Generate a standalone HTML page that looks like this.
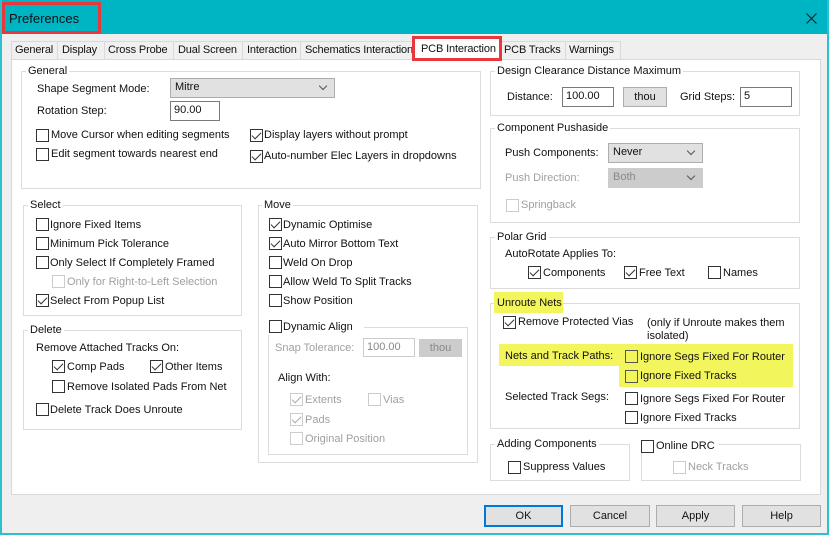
<!DOCTYPE html>
<html><head><meta charset="utf-8"><style>
*{box-sizing:border-box;margin:0;padding:0}
body{width:829px;height:535px;position:relative;overflow:hidden;background:#efefef;font-family:"Liberation Sans",sans-serif;font-size:11px;color:#111}
.a{position:absolute;white-space:nowrap}
.t{position:absolute;white-space:nowrap;line-height:14px}
.g{position:absolute;border:1px solid #dcdcdc}
.gl{position:absolute;background:#fff;padding:0 2px;line-height:14px}
.cb{position:absolute;width:13px;height:13px;border:1px solid #333;background:#fff}
.cb.d{border-color:#ccc}
.cb.c::after{content:"";position:absolute;left:3px;top:0px;width:4px;height:8px;border:solid #333;border-width:0 1.3px 1.3px 0;transform:rotate(45deg)}
.cb.d.c::after{border-color:#aaa}
.in{position:absolute;border:1px solid #7a7a7a;background:#fff;padding:1px 3px;line-height:15px}
.sel{position:absolute;border:1px solid #adadad;background:#e1e1e1;padding:1px 4px;line-height:15px}
.sel::after{content:"";position:absolute;right:8px;top:4px;width:5px;height:5px;border:solid #555;border-width:0 1px 1px 0;transform:rotate(45deg)}
.btn{position:absolute;border:1px solid #adadad;background:#e1e1e1;text-align:center;line-height:20px}
.gr{color:#a0a0a0}
.y{position:absolute;background:#f3f55c}
.tab{letter-spacing:-0.15px}
</style></head><body>
<div class="a" style="left:0;top:0;width:829px;height:34px;background:#00b5c3"></div>
<div class="a" style="left:0;top:0;width:2px;height:535px;background:#2bc0cc"></div>
<div class="a" style="right:0;top:0;width:2px;height:535px;background:#2bc0cc"></div>
<div class="a" style="left:0;bottom:0;width:829px;height:2px;background:#2bc0cc"></div>
<div class="a" style="left:2px;top:2px;width:99px;height:32px;border:3px solid #e8383d"></div>
<div class="a" style="left:9px;top:11px;font-size:13px;color:#111">Preferences</div>
<svg class="a" style="left:806px;top:13px" width="11" height="11"><path d="M0.5 0.5L10.5 10.5M10.5 0.5L0.5 10.5" stroke="#222" stroke-width="1.2"/></svg>

<!-- tabs -->
<div class="a" style="left:11px;top:41px;height:18px;border:1px solid #d9d9d9;border-bottom:none;background:#f0f0f0;width:403px"></div>
<div class="t tab" style="left:15px;top:43px">General</div>
<div class="a" style="left:57px;top:41px;width:1px;height:18px;background:#d9d9d9"></div>
<div class="t tab" style="left:62px;top:43px">Display</div>
<div class="a" style="left:104px;top:41px;width:1px;height:18px;background:#d9d9d9"></div>
<div class="t tab" style="left:108px;top:43px">Cross Probe</div>
<div class="a" style="left:173px;top:41px;width:1px;height:18px;background:#d9d9d9"></div>
<div class="t tab" style="left:178px;top:43px">Dual Screen</div>
<div class="a" style="left:242px;top:41px;width:1px;height:18px;background:#d9d9d9"></div>
<div class="t tab" style="left:247px;top:43px">Interaction</div>
<div class="a" style="left:300px;top:41px;width:1px;height:18px;background:#d9d9d9"></div>
<div class="t tab" style="left:305px;top:43px">Schematics Interaction</div>
<div class="a" style="left:499px;top:41px;width:122px;height:18px;border:1px solid #d9d9d9;border-bottom:none;background:#f0f0f0"></div>
<div class="a" style="left:565px;top:41px;width:1px;height:18px;background:#d9d9d9"></div>
<div class="t tab" style="left:504px;top:43px">PCB Tracks</div>
<div class="t tab" style="left:569px;top:43px">Warnings</div>

<!-- panel -->
<div class="a" style="left:11px;top:59px;width:810px;height:436px;background:#fff;border:1px solid #d9d9d9"></div>
<div class="a" style="left:414px;top:38px;width:85px;height:23px;background:#fff"></div>
<div class="a" style="left:412px;top:36px;width:90px;height:25px;border:3px solid #e8383d"></div>
<div class="t tab" style="left:421px;top:42px">PCB Interaction</div>

<!-- General -->
<div class="g" style="left:21px;top:71px;width:460px;height:118px"></div>
<div class="gl" style="left:26px;top:64px">General</div>
<div class="t" style="left:37px;top:82px">Shape Segment Mode:</div>
<div class="sel" style="left:170px;top:78px;width:165px;height:20px">Mitre</div>
<div class="t" style="left:37px;top:104px">Rotation Step:</div>
<div class="in" style="left:170px;top:101px;width:50px;height:20px">90.00</div>
<div class="cb" style="left:36px;top:129px"></div><div class="t" style="left:51px;top:128px">Move Cursor when editing segments</div>
<div class="cb" style="left:36px;top:148px"></div><div class="t" style="left:51px;top:147px">Edit segment towards nearest end</div>
<div class="cb c" style="left:250px;top:129px"></div><div class="t" style="left:264px;top:128px">Display layers without prompt</div>
<div class="cb c" style="left:250px;top:150px"></div><div class="t" style="left:264px;top:149px">Auto-number Elec Layers in dropdowns</div>

<!-- Select -->
<div class="g" style="left:23px;top:205px;width:219px;height:111px"></div>
<div class="gl" style="left:28px;top:198px">Select</div>
<div class="cb" style="left:36px;top:218px"></div><div class="t" style="left:50px;top:218px">Ignore Fixed Items</div>
<div class="cb" style="left:36px;top:237px"></div><div class="t" style="left:50px;top:237px">Minimum Pick Tolerance</div>
<div class="cb" style="left:36px;top:256px"></div><div class="t" style="left:50px;top:256px">Only Select If Completely Framed</div>
<div class="cb d" style="left:52px;top:275px"></div><div class="t gr" style="left:67px;top:275px">Only for Right-to-Left Selection</div>
<div class="cb c" style="left:36px;top:294px"></div><div class="t" style="left:50px;top:294px">Select From Popup List</div>

<!-- Delete -->
<div class="g" style="left:23px;top:330px;width:219px;height:100px"></div>
<div class="gl" style="left:28px;top:323px">Delete</div>
<div class="t" style="left:36px;top:341px">Remove Attached Tracks On:</div>
<div class="cb c" style="left:52px;top:360px"></div><div class="t" style="left:67px;top:360px">Comp Pads</div>
<div class="cb c" style="left:150px;top:360px"></div><div class="t" style="left:165px;top:360px">Other Items</div>
<div class="cb" style="left:52px;top:380px"></div><div class="t" style="left:67px;top:380px">Remove Isolated Pads From Net</div>
<div class="cb" style="left:36px;top:403px"></div><div class="t" style="left:50px;top:403px">Delete Track Does Unroute</div>

<!-- Move -->
<div class="g" style="left:258px;top:205px;width:220px;height:258px"></div>
<div class="gl" style="left:262px;top:198px">Move</div>
<div class="cb c" style="left:269px;top:218px"></div><div class="t" style="left:283px;top:218px">Dynamic Optimise</div>
<div class="cb c" style="left:269px;top:237px"></div><div class="t" style="left:283px;top:237px">Auto Mirror Bottom Text</div>
<div class="cb" style="left:269px;top:256px"></div><div class="t" style="left:283px;top:256px">Weld On Drop</div>
<div class="cb" style="left:269px;top:275px"></div><div class="t" style="left:283px;top:275px">Allow Weld To Split Tracks</div>
<div class="cb" style="left:269px;top:294px"></div><div class="t" style="left:283px;top:294px">Show Position</div>
<div class="g" style="left:268px;top:327px;width:200px;height:128px"></div>
<div class="a" style="left:266px;top:315px;width:98px;height:20px;background:#fff"></div>
<div class="cb" style="left:269px;top:320px"></div><div class="t" style="left:283px;top:320px">Dynamic Align</div>
<div class="t gr" style="left:275px;top:341px">Snap Tolerance:</div>
<div class="in gr" style="left:363px;top:338px;width:52px;height:19px;border-color:#ccc;color:#888">100.00</div>
<div class="btn gr" style="left:419px;top:339px;width:43px;height:18px;background:#ccc;border-color:#ccc;color:#888;line-height:16px">thou</div>
<div class="t" style="left:278px;top:371px">Align With:</div>
<div class="cb d c" style="left:290px;top:393px"></div><div class="t gr" style="left:305px;top:393px">Extents</div>
<div class="cb d" style="left:368px;top:393px"></div><div class="t gr" style="left:383px;top:393px">Vias</div>
<div class="cb d c" style="left:290px;top:413px"></div><div class="t gr" style="left:305px;top:413px">Pads</div>
<div class="cb d" style="left:290px;top:432px"></div><div class="t gr" style="left:305px;top:432px">Original Position</div>

<!-- Design Clearance -->
<div class="g" style="left:490px;top:71px;width:310px;height:45px"></div>
<div class="gl" style="left:495px;top:64px">Design Clearance Distance Maximum</div>
<div class="t" style="left:507px;top:90px">Distance:</div>
<div class="in" style="left:562px;top:87px;width:52px;height:20px">100.00</div>
<div class="btn" style="left:623px;top:87px;width:44px;height:20px;line-height:18px">thou</div>
<div class="t" style="left:680px;top:90px">Grid Steps:</div>
<div class="in" style="left:740px;top:87px;width:52px;height:20px">5</div>

<!-- Pushaside -->
<div class="g" style="left:490px;top:128px;width:310px;height:95px"></div>
<div class="gl" style="left:495px;top:121px">Component Pushaside</div>
<div class="t" style="left:505px;top:146px">Push Components:</div>
<div class="sel" style="left:608px;top:143px;width:95px;height:20px">Never</div>
<div class="t gr" style="left:505px;top:171px">Push Direction:</div>
<div class="sel gr" style="left:608px;top:168px;width:95px;height:20px;background:#ccc;border-color:#ccc;color:#888">Both</div>
<div class="cb d" style="left:506px;top:199px"></div><div class="t gr" style="left:521px;top:198px">Springback</div>

<!-- Polar -->
<div class="g" style="left:490px;top:237px;width:310px;height:52px"></div>
<div class="gl" style="left:495px;top:230px">Polar Grid</div>
<div class="t" style="left:505px;top:247px">AutoRotate Applies To:</div>
<div class="cb c" style="left:528px;top:266px"></div><div class="t" style="left:543px;top:266px">Components</div>
<div class="cb c" style="left:624px;top:266px"></div><div class="t" style="left:639px;top:266px">Free Text</div>
<div class="cb" style="left:708px;top:266px"></div><div class="t" style="left:723px;top:266px">Names</div>

<!-- Unroute -->
<div class="g" style="left:490px;top:303px;width:310px;height:126px"></div>
<div class="y" style="left:494px;top:292px;width:69px;height:21px"></div>
<div class="t" style="left:497px;top:296px">Unroute Nets</div>
<div class="cb c" style="left:503px;top:316px"></div><div class="t" style="left:518px;top:315px">Remove Protected Vias</div>
<div class="t" style="left:647px;top:316px">(only if Unroute makes them</div>
<div class="t" style="left:647px;top:329px">isolated)</div>
<div class="y" style="left:499px;top:344px;width:294px;height:22px"></div>
<div class="y" style="left:619px;top:366px;width:174px;height:21px"></div>
<div class="t" style="left:505px;top:349px">Nets and Track Paths:</div>
<div class="cb" style="left:625px;top:350px;border-color:#555;background:transparent"></div><div class="t" style="left:640px;top:350px">Ignore Segs Fixed For Router</div>
<div class="cb" style="left:625px;top:370px;border-color:#555;background:transparent"></div><div class="t" style="left:640px;top:369px">Ignore Fixed Tracks</div>
<div class="t" style="left:505px;top:390px">Selected Track Segs:</div>
<div class="cb" style="left:625px;top:392px"></div><div class="t" style="left:640px;top:392px">Ignore Segs Fixed For Router</div>
<div class="cb" style="left:625px;top:411px"></div><div class="t" style="left:640px;top:411px">Ignore Fixed Tracks</div>

<!-- Adding -->
<div class="g" style="left:490px;top:444px;width:140px;height:37px"></div>
<div class="gl" style="left:495px;top:437px">Adding Components</div>
<div class="cb" style="left:508px;top:461px"></div><div class="t" style="left:523px;top:460px">Suppress Values</div>
<div class="g" style="left:641px;top:444px;width:160px;height:37px"></div>
<div class="a" style="left:639px;top:437px;width:80px;height:16px;background:#fff"></div>
<div class="cb" style="left:641px;top:440px"></div><div class="t" style="left:656px;top:439px">Online DRC</div>
<div class="cb d" style="left:673px;top:461px"></div><div class="t gr" style="left:688px;top:460px">Neck Tracks</div>

<!-- buttons -->
<div class="btn" style="left:484px;top:505px;width:79px;height:22px;border:2px solid #0078d7;line-height:18px">OK</div>
<div class="btn" style="left:570px;top:505px;width:80px;height:22px">Cancel</div>
<div class="btn" style="left:656px;top:505px;width:79px;height:22px">Apply</div>
<div class="btn" style="left:742px;top:505px;width:79px;height:22px">Help</div>
</body></html>
